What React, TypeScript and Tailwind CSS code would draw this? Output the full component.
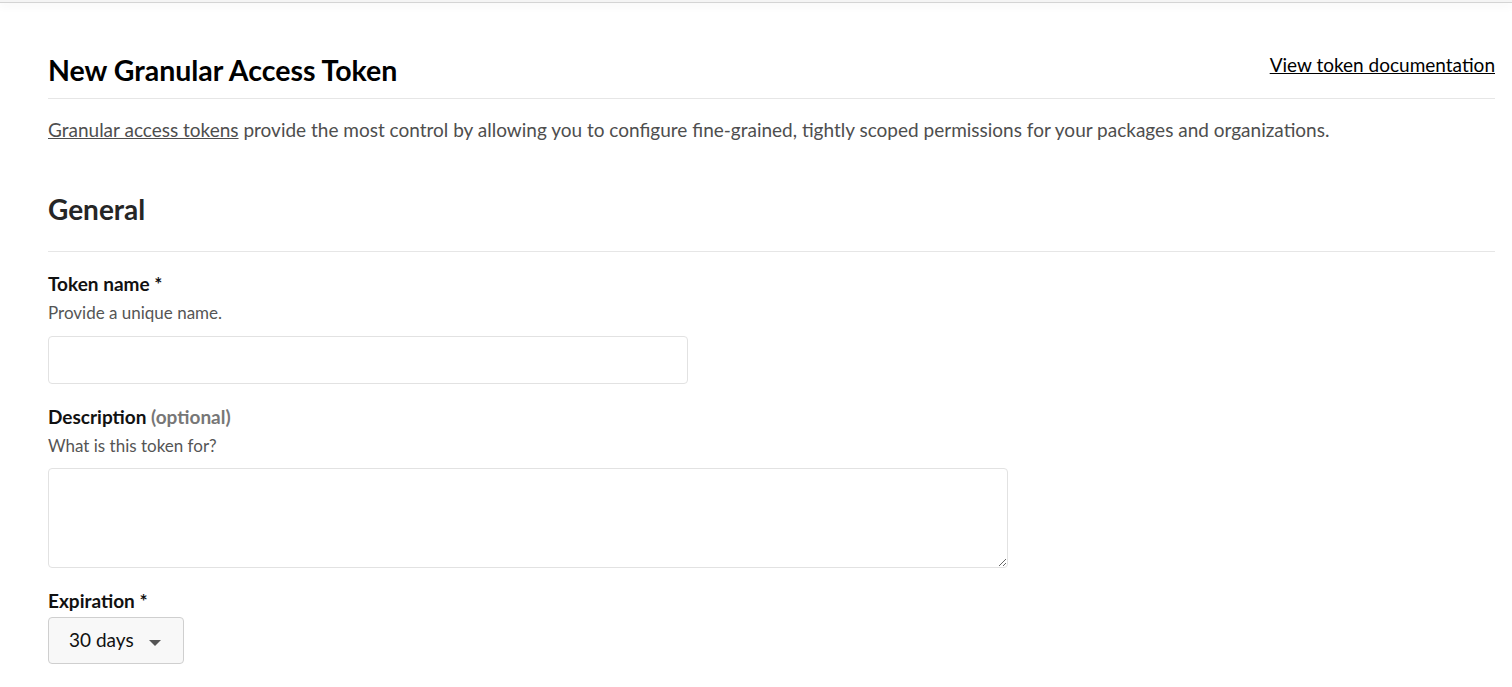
export default function App() {
  return (
    <div className="min-h-screen bg-white text-[#111] font-['Lato','Noto_Sans',sans-serif]">
      <div className="h-[3px] bg-[#f4f4f4] border-b border-[#d4d4d4] shadow-[0_2px_10px_rgba(0,0,0,0.08)]" />

      <div className="pl-12 pr-[17px] pt-[49px]">
        <div className="flex items-end justify-between border-b border-[#e6e6e6] pb-[10px]">
          <h1 className="text-[28.5px] leading-[36px] font-bold text-black">New Granular Access Token</h1>
          <a href="#" className="text-[19px] leading-[24px] text-black underline mb-[11px]">View token documentation</a>
        </div>

        <p className="mt-[18px] text-[19px] leading-[26px] text-[#4e4e4e]">
          <a href="#" className="underline">Granular access tokens</a> provide the most control by allowing you to configure fine-grained, tightly scoped permissions for your packages and organizations.
        </p>

        <h2 className="mt-[48px] text-[28px] leading-[36px] font-bold text-[#262626] pb-[24px] border-b border-[#e6e6e6]">General</h2>

        <div className="mt-[19px]">
          <label className="block text-[19px] leading-[26px] font-bold text-[#111]">Token name *</label>
          <p className="text-[17px] leading-[24px] text-[#555] mt-[4px]">Provide a unique name.</p>
          <input type="text" className="mt-[11px] block w-[640px] h-[48px] border border-[#e2e2e2] rounded-[4px] px-3 outline-none" />
        </div>

        <div className="mt-[20px]">
          <label className="block text-[19px] leading-[26px] font-bold text-[#111]">
            Description <span className="text-[#777]">(optional)</span>
          </label>
          <p className="text-[17px] leading-[24px] text-[#555] mt-[4px]">What is this token for?</p>
          <textarea className="mt-[10px] block w-[960px] h-[100px] border border-[#e2e2e2] rounded-[4px] px-3 py-2 outline-none" />
        </div>

        <div className="mt-[20px]">
          <label className="block text-[19px] leading-[26px] font-bold text-[#111]">Expiration *</label>
          <button className="mt-[3px] flex items-center h-[47px] w-[136px] pl-[20px] bg-[#f8f8f8] border border-[#cfcfcf] rounded-[4px] text-[19px] text-[#111]">
            30 days
            <svg width="12" height="6" viewBox="0 0 12 6" className="ml-[15px] mt-[4px]">
              <path d="M0 0h12L6 6z" fill="#555" />
            </svg>
          </button>
        </div>
      </div>
    </div>
  );
}
